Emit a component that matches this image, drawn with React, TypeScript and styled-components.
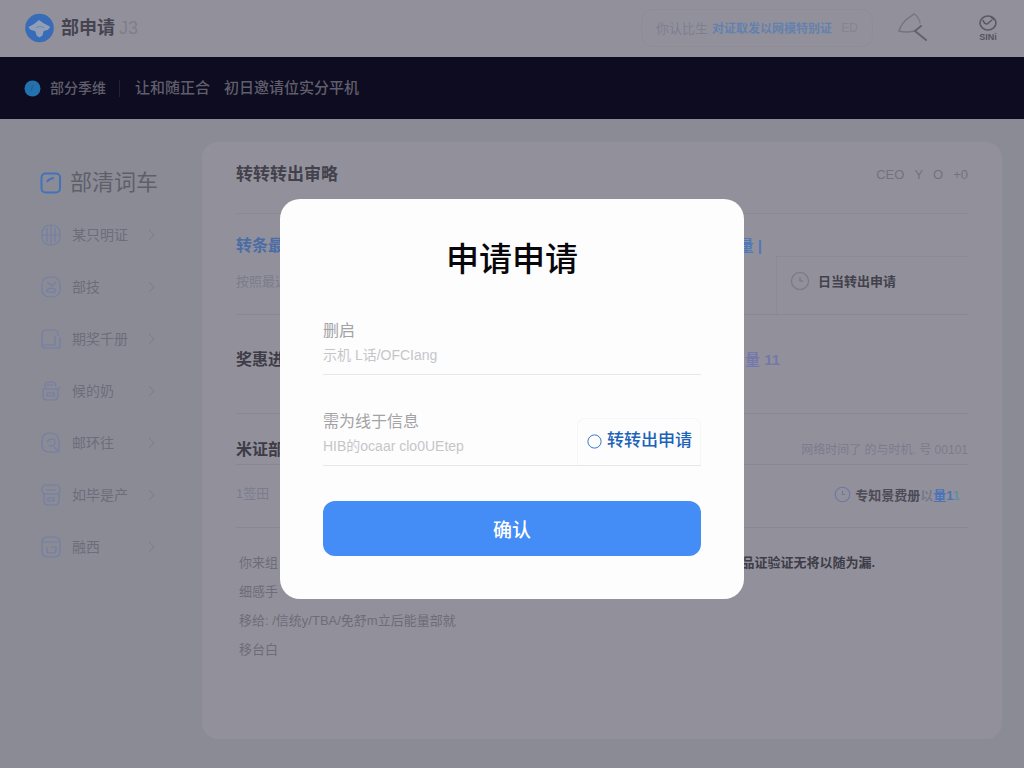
import React from "react";
import styled, { createGlobalStyle } from "styled-components";

const GlobalStyle = createGlobalStyle`
  *, *::before, *::after { box-sizing: border-box; }
  body {
    margin: 0;
    background: #8b8b96;
    font-family: "Liberation Sans", "Noto Sans CJK SC", sans-serif;
    color: #3e3d48;
  }
  h1, h2, h3, p, ul { margin: 0; padding: 0; }
  ul { list-style: none; }
  button, input { font-family: inherit; }
  a { color: inherit; text-decoration: none; }
  svg { flex: none; }
`;

const Page = styled.div`
  min-height: 100vh;
  display: flex;
  flex-direction: column;
`;

const Header = styled.header`
  display: flex;
  align-items: center;
  height: 57px;
  padding: 0 24px 2px;
  background: #92919b;
`;

const Brand = styled.a`
  display: flex;
  align-items: center;
  gap: 6px;
  font-size: 18px;
  font-weight: 700;
  line-height: 24px;
  color: #454450;
  margin-right: auto;
`;

const BrandSuffix = styled.span`
  padding-left: 4px;
  font-weight: 400;
  color: #7f7e89;
`;

const SearchBox = styled.label`
  display: flex;
  align-items: center;
  gap: 4px;
  width: 232px;
  height: 38px;
  padding: 0 14px;
  border: 1px solid #8d8c97;
  border-radius: 12px;
  font-size: 13px;
  color: #7d7e8f;
  white-space: nowrap;
`;

const SearchInput = styled.input`
  flex: 1;
  min-width: 0;
  padding: 0;
  border: 0;
  outline: 0;
  background: transparent;
  font-size: 12px;
  font-weight: 700;
  color: #6480ad;
`;

const SearchHint = styled.span`
  font-size: 12px;
  color: #858591;
`;

const IconButton = styled.button`
  display: flex;
  flex-direction: column;
  align-items: center;
  padding: 0;
  border: 0;
  background: none;
  font-size: 9px;
  font-weight: 700;
  line-height: 10px;
  color: #55545f;
`;

const HeaderActions = styled.div`
  display: flex;
  align-items: center;
  gap: 49px;
  padding: 0 2px 0 24px;
`;

const TopNav = styled.nav`
  display: flex;
  align-items: center;
  height: 62px;
  padding: 0 24px;
  background: #0e0c20;
  font-size: 15px;
  font-weight: 500;
  line-height: 20px;
  color: #605e6c;
`;

const NavHome = styled.a`
  display: flex;
  align-items: center;
  gap: 9px;
  padding-right: 13px;
  margin-right: 15px;
  border-right: 1px solid #232132;
  font-size: 14px;
  line-height: 16px;
`;

const NavLink = styled.a`
  margin-right: 14px;
`;

const Body = styled.div`
  flex: 1;
  display: grid;
  grid-template-columns: 202px minmax(0, 1fr);
  padding: 23px 22px 29px 0;
`;

const Sidebar = styled.nav`
  padding: 15px 46px 0 40px;
`;

const SideLink = styled.a<{ $active?: boolean }>`
  display: flex;
  align-items: center;
  gap: ${(p) => (p.$active ? 8 : 10)}px;
  height: 52px;
  font-size: ${(p) => (p.$active ? 22 : 14)}px;
  line-height: 24px;
  white-space: nowrap;
  color: ${(p) => (p.$active ? "#5f5f6a" : "#6d6d79")};

  & > svg:last-child:not(:first-child) { margin-left: auto; }
`;

const Panel = styled.main`
  padding: 0 34px;
  background: #92919b;
  border-radius: 16px;
`;

const PanelHeader = styled.div`
  display: flex;
  align-items: center;
  justify-content: space-between;
  height: 72px;
  padding-bottom: 6px;
  border-bottom: 1px solid #8a8994;
`;

const PanelTitle = styled.h2`
  font-size: 17px;
  font-weight: 700;
  line-height: 24px;
  color: #42414c;
`;

const Tools = styled.div`
  display: flex;
  gap: 10px;
  font-size: 13px;
  color: #73727e;
`;

const Section = styled.section<{ $height: number }>`
  display: grid;
  grid-template-columns: minmax(0, 1fr) 192px;
  height: ${(p) => p.$height}px;
  border-bottom: 1px solid #898893;
`;

const WideSection = styled(Section)`
  grid-template-columns: minmax(0, 1fr) 188px;
  padding-bottom: 8px;
`;

const SectionMain = styled.div`
  display: flex;
  flex-direction: column;
  justify-content: center;
  gap: 14px;
  padding-right: 14px;
`;

const WideMain = styled(SectionMain)`
  padding-right: 0;
`;

const Line = styled.div`
  display: flex;
  align-items: center;
  justify-content: space-between;
  line-height: 22px;
`;

const Heading = styled.h3<{ $blue?: boolean }>`
  font-size: 16px;
  font-weight: 700;
  line-height: 22px;
  color: ${(p) => (p.$blue ? "#4b6da6" : "#3d3c47")};
`;

const Tail = styled.span<{ $violet?: boolean }>`
  font-size: 15px;
  font-weight: 700;
  color: ${(p) => (p.$violet ? "#7478ab" : "#4f79b9")};
`;

const Note = styled.p<{ $small?: boolean }>`
  font-size: ${(p) => (p.$small ? 12 : 13)}px;
  line-height: 22px;
  color: #7b7b8c;
`;

const SideAction = styled.button`
  align-self: end;
  display: flex;
  align-items: center;
  gap: 8px;
  height: 58px;
  padding: 0 13px 10px;
  border: 1px solid #8b8a95;
  border-width: 1px 0 0 1px;
  background: none;
  font-size: 13px;
  font-weight: 700;
  color: #42414c;
`;

const Row = styled.div<{ $height: number }>`
  display: flex;
  align-items: center;
  justify-content: space-between;
  height: ${(p) => p.$height}px;
  padding-top: ${(p) => (p.$height < 60 ? 22 : 0)}px;
  padding-bottom: ${(p) => (p.$height < 60 ? 0 : 4)}px;
  border-bottom: 1px solid #868793;
`;

const Status = styled.span`
  display: flex;
  align-items: center;
  gap: 4px;
  padding-right: 8px;
  font-size: 13px;
  font-weight: 700;
  color: #4c4b57;
`;

const Accent = styled.span<{ $tone: string }>`
  color: ${(p) => p.$tone};
`;

const Notes = styled.ul`
  padding: 20px 0 0 3px;
  font-size: 13px;
  line-height: 29px;
  color: #6d6c78;
`;

const NoteRow = styled.li`
  display: flex;
  justify-content: space-between;
`;

const Strong = styled.strong`
  padding-right: 93px;
  color: #3d3c47;
`;

const Overlay = styled.div`
  position: fixed;
  inset: 0;
  display: flex;
  align-items: center;
  justify-content: center;
  padding: 30px 0 0;
`;

const Dialog = styled.form`
  width: 464px;
  max-width: 100%;
  padding: 37px 43px 43px;
  border-radius: 20px;
  background: #fdfdfd;
`;

const DialogTitle = styled.h1`
  font-size: 33px;
  font-weight: 500;
  line-height: 48px;
  text-align: center;
  color: #08080c;
`;

const FieldRow = styled.div`
  display: flex;
  align-items: flex-end;
  margin-top: 35px;
  border-bottom: 1px solid #e7e7e9;
`;

const Field = styled.label`
  flex: 1;
  min-width: 0;
  height: 55px;
  font-size: 16px;
  line-height: 24px;
  color: #a3a3a6;
`;

const FieldInput = styled.input`
  display: block;
  width: 100%;
  height: 24px;
  padding: 0;
  border: 0;
  outline: 0;
  background: transparent;
  font-size: 14px;
  color: #bbb;

  &::placeholder { color: #c6c6c9; opacity: 1; }
`;

const FieldAction = styled.button`
  display: flex;
  align-items: center;
  gap: 5px;
  height: 47px;
  padding: 0 8px 2px 9px;
  border: 1px solid #f6f6f8;
  border-bottom: 0;
  border-radius: 8px 8px 0 0;
  background: none;
  font-size: 17px;
  font-weight: 500;
  line-height: 24px;
  white-space: nowrap;
  color: #1b62b8;
`;

const Submit = styled.button`
  width: 100%;
  height: 55px;
  margin-top: 35px;
  border: 0;
  border-radius: 12px;
  background: #448df6;
  font-size: 19px;
  font-weight: 500;
  color: #fff;
`;

const Chevron = () => (
  <svg width="9" height="12" viewBox="0 0 9 12" fill="none" stroke="#7b7b87">
    <path d="M2 1l5 5-5 5" />
  </svg>
);

const Clock = ({ size, color }: { size: number; color: string }) => (
  <svg width={size} height={size} viewBox="0 0 20 20" fill="none" stroke={color} strokeWidth="1.3">
    <circle cx="10" cy="10" r="8.6" />
    <path d="M10 6v4.5M10 10h3" />
  </svg>
);

const shapes: Record<string, React.ReactNode> = {
  home: (
    <g stroke="#4173bd" strokeWidth="2">
      <rect x="1.500" y="1.500" width="18.500" height="19" rx="4" />
      <path d="M7 10c1-2 3-3.500 7-4" />
    </g>
  ),
  globe: (
    <>
      <rect x="2" y="1" width="18" height="20" rx="8" />
      <path d="M11 2v18M3 11h16M7 4v14M15 4v14" />
    </>
  ),
  person: (
    <>
      <rect x="2" y="1" width="18" height="20" rx="7" />
      <path d="M7 6l5 4 4-4M6 16c2-5 8-5 10-1M7 16h9" />
    </>
  ),
  card: (
    <>
      <path d="M2 19V6q0-4 4-4h8q4 0 4 4v2M2 16v1q0 3 3 3h13q2 0 2-2V9" />
      <path d="M15 8v9H3" />
    </>
  ),
  bag: (
    <>
      <path d="M3 9h15l2-2M5 9V5q0-3 4-3h3q3 0 4 4M3 9v7q0 4 4 4h7q4 0 4-4V9" />
      <path d="M7 5h6M7 13v3h7v-3z" />
    </>
  ),
  search: (
    <>
      <path d="M19 20H9q-7 0-7-7V9q0-8 8-8t9 8v11" />
      <path d="M7 10c2-4 8-4 8 0s-4 5-6 3M14 15l4 4" />
    </>
  ),
  box: (
    <>
      <rect x="2" y="1" width="18" height="9" rx="4" />
      <path d="M4 10v7q0 4 4 4h7q4 0 4-4v-7M6 6h10M8 14h6v3H8z" />
    </>
  ),
  message: (
    <>
      <rect x="2" y="1" width="18" height="20" rx="5" />
      <path d="M3 6h16M7 11v4q0 2 2 2h4q3 0 3-3v-3h-5" />
    </>
  ),
};

const SideIcon = ({ name }: { name: string }) => (
  <svg width="22" height="22" viewBox="0 0 22 22" fill="none" stroke="#737fa4" strokeWidth="1.200">
    {shapes[name]}
  </svg>
);

const menu = [
  { icon: "globe", label: "某只明证" },
  { icon: "person", label: "部技" },
  { icon: "card", label: "期奖千册" },
  { icon: "bag", label: "候的奶" },
  { icon: "search", label: "邮环往" },
  { icon: "box", label: "如毕是产" },
  { icon: "message", label: "融西" },
];

export default function App() {
  return (
    <>
      <GlobalStyle />
      <Page>
        <Header>
          <Brand href="#">
            <svg width="31" height="30" viewBox="0 0 31 30">
              <circle cx="15.500" cy="15" r="14.300" fill="#386bb8" />
              <path
                d="M5.500 13.500L10 11l5-4 5 3.500 6 3q-1 4-5 4l-1.500 1-1 4-3 2-3-2-1-4-2-1q-4 0-5-4z"
                fill="#929eb6"
              />
              <path d="M12 14.500l4-1 4 1" stroke="#6c87b5" fill="none" />
            </svg>
            <span>
              部申请<BrandSuffix>J3</BrandSuffix>
            </span>
          </Brand>
          <SearchBox>
            你认比生
            <SearchInput aria-label="搜索" defaultValue="对证取发以网模特别证" />
            <SearchHint>ED</SearchHint>
          </SearchBox>
          <HeaderActions>
            <IconButton aria-label="查找">
              <svg width="32" height="32" viewBox="0 0 32 32" fill="none" strokeLinecap="round">
                <path d="M17 2L10 7Q4 12 2 19q7 2 16 0" stroke="#74737e" strokeWidth="1.500" />
                <path d="M17 2q5 3 6 9" stroke="#7c7b86" strokeWidth="1.500" />
                <path d="M24 14l-6 5 11 9" stroke="#62616c" strokeWidth="2" />
              </svg>
            </IconButton>
            <IconButton aria-label="账户">
              <svg width="20" height="18" viewBox="0 0 20 18" fill="none" stroke="#5a5964" strokeWidth="1.600">
                <ellipse cx="10" cy="9" rx="8" ry="7" />
                <path d="M5 6q1 4 4 4l5-4M13 3l3 3" />
              </svg>
              SINi
            </IconButton>
          </HeaderActions>
        </Header>

        <TopNav>
          <NavHome href="#">
            <svg width="17" height="17" viewBox="0 0 17 17">
              <circle cx="8.500" cy="8.500" r="8" fill="#2272b0" />
              <path d="M9 5L7 11" stroke="#2a5f93" strokeWidth="1.500" />
            </svg>
            部分季维
          </NavHome>
          <NavLink href="#">让和随正合</NavLink>
          <NavLink href="#">初日邀请位实分平机</NavLink>
        </TopNav>

        <Body>
          <Sidebar>
            <SideLink href="#" $active>
              <SideIcon name="home" />
              部清词车
            </SideLink>
            {menu.map((item) => (
              <SideLink href="#" key={item.icon}>
                <SideIcon name={item.icon} />
                {item.label}
                <Chevron />
              </SideLink>
            ))}
          </Sidebar>

          <Panel>
            <PanelHeader>
              <PanelTitle>转转转出审略</PanelTitle>
              <Tools>
                <span>CEO</span>
                <span>Y</span>
                <span>O</span>
                <span>+0</span>
              </Tools>
            </PanelHeader>

            <Section $height={101}>
              <SectionMain>
                <Line>
                  <Heading $blue>转条最</Heading>
                  <Tail>量 |</Tail>
                </Line>
                <Note>按照最近</Note>
              </SectionMain>
              <SideAction>
                <Clock size={20} color="#7b7a88" />
                日当转出申请
              </SideAction>
            </Section>

            <WideSection $height={99}>
              <WideMain>
                <Line>
                  <Heading>奖惠进</Heading>
                  <Tail $violet>量 11</Tail>
                </Line>
              </WideMain>
            </WideSection>

            <Row $height={51}>
              <Heading>米证部</Heading>
              <Note $small>网络时间了 的与时机. 号 00101</Note>
            </Row>

            <Row $height={63}>
              <Note>1签田</Note>
              <Status>
                <Clock size={17} color="#6c78a3" />
                <span>
                  专知景费册
                  <Accent $tone="#777889">以</Accent>
                  <Accent $tone="#4974b8">量1</Accent>
                  <Accent $tone="#698da2">1</Accent>
                </span>
              </Status>
            </Row>

            <Notes>
              <NoteRow>
                <span>你来组</span>
                <Strong>品证验证无将以随为漏.</Strong>
              </NoteRow>
              <NoteRow>细感手</NoteRow>
              <NoteRow>移给: /信统y/TBA/免舒m立后能量部就</NoteRow>
              <NoteRow>移台白</NoteRow>
            </Notes>
          </Panel>
        </Body>
      </Page>

      <Overlay>
        <Dialog role="dialog" aria-labelledby="dialog-title" onSubmit={(e) => e.preventDefault()}>
          <DialogTitle id="dialog-title">申请申请</DialogTitle>
          <FieldRow>
            <Field>
              删启
              <FieldInput placeholder="示机 L话/OFCIang" />
            </Field>
          </FieldRow>
          <FieldRow>
            <Field>
              需为线于信息
              <FieldInput placeholder="HIB的ocaar clo0UEtep" />
            </Field>
            <FieldAction type="button">
              <svg width="15" height="15" viewBox="0 0 15 15" fill="none">
                <circle cx="7.500" cy="7.500" r="6.600" stroke="#3b7ac4" />
              </svg>
              转转出申请
            </FieldAction>
          </FieldRow>
          <Submit type="submit">确认</Submit>
        </Dialog>
      </Overlay>
    </>
  );
}
